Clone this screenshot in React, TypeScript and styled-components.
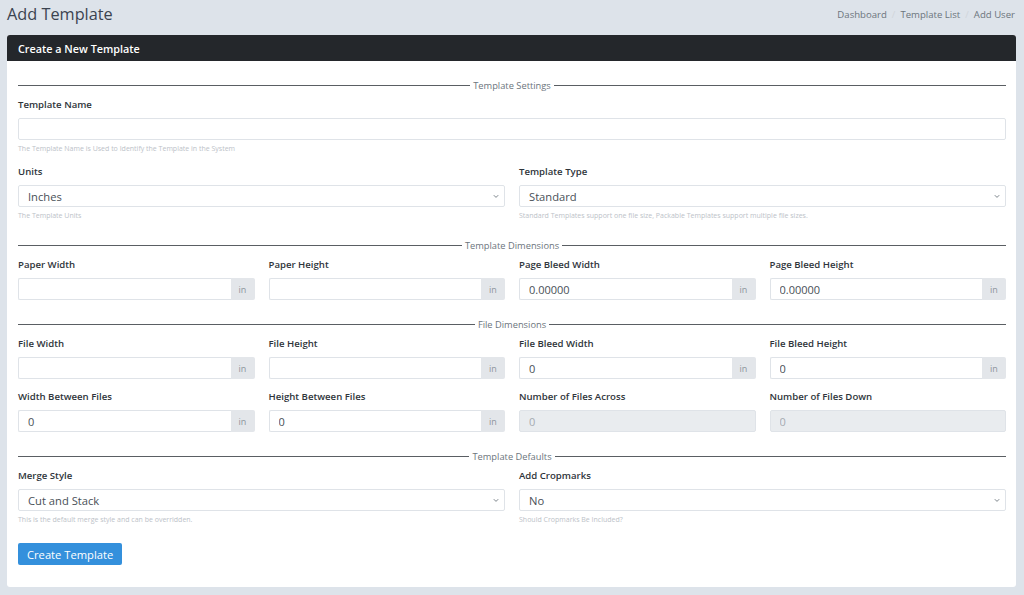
import * as React from 'react';
import styled, { createGlobalStyle } from 'styled-components';

const GlobalStyle = createGlobalStyle`
    html, body {
        margin: 0;
        padding: 0;
        background: #dde3ea;
        font-family: "Open Sans", "Liberation Sans", sans-serif;
    }
    * { box-sizing: border-box; }
`;

const Page = styled.div`
    padding: 0 8px 8px 7px;
    min-height: 595px;
`;

const TopBar = styled.div`
    display: flex;
    align-items: center;
    justify-content: space-between;
    height: 35px;
    padding-bottom: 7px;
`;

const PageTitle = styled.h1`
    margin: 0;
    font-size: 16.3px;
    font-weight: 400;
    color: #3b4350;
`;

const Crumbs = styled.nav`
    display: flex;
    align-items: center;
    gap: 5px;
    font-size: 9.6px;
    color: #6c757d;
    padding-right: 1px;
`;

const CrumbSep = styled.span`
    color: #d0d5da;
`;

const Card = styled.div`
    background: #fff;
    border-radius: 3px;
    overflow: hidden;
`;

const CardHeader = styled.div`
    background: #24272b;
    color: #fff;
    height: 26px;
    display: flex;
    align-items: center;
    padding: 0 11px;
    font-size: 10.8px;
    font-weight: 600;
`;

const CardBody = styled.div`
    padding: 11px 10px 22px 11px;
`;

const Separator = styled.div`
    display: flex;
    align-items: center;
    gap: 3px;
    height: 12px;
    margin: 7px 0 7px;
    font-size: 9.3px;
    color: #6c757d;
    &::before, &::after {
        content: '';
        flex: 1;
        height: 1px;
        background: #5a5e63;
    }
`;

const Row = styled.div<{ cols: number }>`
    display: grid;
    grid-template-columns: repeat(${(p) => p.cols}, 1fr);
    column-gap: 14px;
`;

const Group = styled.div`
    margin-bottom: 11px;
    min-width: 0;
`;

const Label = styled.div`
    font-size: 9.6px;
    font-weight: 600;
    color: #2f353b;
    height: 14px;
    line-height: 14px;
    margin-bottom: 6px;
`;

const Field = styled.input<{ disabled?: boolean }>`
    display: block;
    width: 100%;
    min-width: 0;
    height: 22px;
    border: 1px solid #dfe3e8;
    border-radius: 2px;
    padding: 0 9px;
    font-family: inherit;
    font-size: 11px;
    color: ${(p) => (p.disabled ? '#a5abb2' : '#495057')};
    background: ${(p) => (p.disabled ? '#e9ecef' : '#fff')};
    outline: none;
`;

const InputGroup = styled.div`
    display: flex;
    height: 22px;
`;

const GroupField = styled(Field)`
    flex: 1;
    border-right: none;
    border-radius: 2px 0 0 2px;
`;

const Addon = styled.span`
    width: 24px;
    display: flex;
    align-items: center;
    justify-content: center;
    background: #e3e6ea;
    color: #8d949c;
    font-size: 9px;
    border-radius: 0 2px 2px 0;
`;

const SelectWrap = styled.div`
    position: relative;
    height: 22px;
    border: 1px solid #dfe3e8;
    border-radius: 2px;
    padding: 0 9px;
    display: flex;
    align-items: center;
    font-size: 11.2px;
    color: #495057;
`;

const Chevron = styled.svg`
    position: absolute;
    right: 5px;
    top: 8px;
`;

const Help = styled.div`
    font-size: 7px;
    color: #bcc2c8;
    height: 10px;
    line-height: 10px;
    margin-top: 4px;
`;

const Button = styled.button`
    margin-top: 7px;
    height: 22px;
    padding: 0 9px;
    border: none;
    border-radius: 2px;
    background: #3490dc;
    color: #fff;
    font-family: inherit;
    font-size: 11.2px;
    font-weight: 500;
`;

type UnitFieldProps = { label: string; value?: string };

const UnitField = ({ label, value }: UnitFieldProps) => (
    <Group>
        <Label>{label}</Label>
        <InputGroup>
            <GroupField defaultValue={value} />
            <Addon>in</Addon>
        </InputGroup>
    </Group>
);

type SelectProps = { label: string; value: string; help?: string };

const SelectField = ({ label, value, help }: SelectProps) => (
    <Group>
        <Label>{label}</Label>
        <SelectWrap>
            {value}
            <Chevron width="6" height="5" viewBox="0 0 6 5">
                <path d="M0.8 1.2 L3 3.4 L5.2 1.2" fill="none" stroke="#6c757d" strokeWidth="0.9" />
            </Chevron>
        </SelectWrap>
        {help && <Help>{help}</Help>}
    </Group>
);

export default function App() {
    return (
        <Page>
            <GlobalStyle />
            <TopBar>
                <PageTitle>Add Template</PageTitle>
                <Crumbs>
                    <span>Dashboard</span>
                    <CrumbSep>/</CrumbSep>
                    <span>Template List</span>
                    <CrumbSep>/</CrumbSep>
                    <span>Add User</span>
                </Crumbs>
            </TopBar>
            <Card>
                <CardHeader>Create a New Template</CardHeader>
                <CardBody>
                    <Separator>Template Settings</Separator>
                    <Group>
                        <Label>Template Name</Label>
                        <Field />
                        <Help>The Template Name is Used to Identify the Template in the System</Help>
                    </Group>
                    <Row cols={2}>
                        <SelectField label="Units" value="Inches" help="The Template Units" />
                        <SelectField
                            label="Template Type"
                            value="Standard"
                            help="Standard Templates support one file size, Packable Templates support multiple file sizes."
                        />
                    </Row>

                    <Separator>Template Dimensions</Separator>
                    <Row cols={4}>
                        <UnitField label="Paper Width" />
                        <UnitField label="Paper Height" />
                        <UnitField label="Page Bleed Width" value="0.00000" />
                        <UnitField label="Page Bleed Height" value="0.00000" />
                    </Row>

                    <Separator>File Dimensions</Separator>
                    <Row cols={4}>
                        <UnitField label="File Width" />
                        <UnitField label="File Height" />
                        <UnitField label="File Bleed Width" value="0" />
                        <UnitField label="File Bleed Height" value="0" />
                        <UnitField label="Width Between Files" value="0" />
                        <UnitField label="Height Between Files" value="0" />
                        <Group>
                            <Label>Number of Files Across</Label>
                            <Field disabled defaultValue="0" />
                        </Group>
                        <Group>
                            <Label>Number of Files Down</Label>
                            <Field disabled defaultValue="0" />
                        </Group>
                    </Row>

                    <Separator>Template Defaults</Separator>
                    <Row cols={2}>
                        <SelectField
                            label="Merge Style"
                            value="Cut and Stack"
                            help="This is the default merge style and can be overridden."
                        />
                        <SelectField label="Add Cropmarks" value="No" help="Should Cropmarks Be Included?" />
                    </Row>
                    <Button>Create Template</Button>
                </CardBody>
            </Card>
        </Page>
    );
}
